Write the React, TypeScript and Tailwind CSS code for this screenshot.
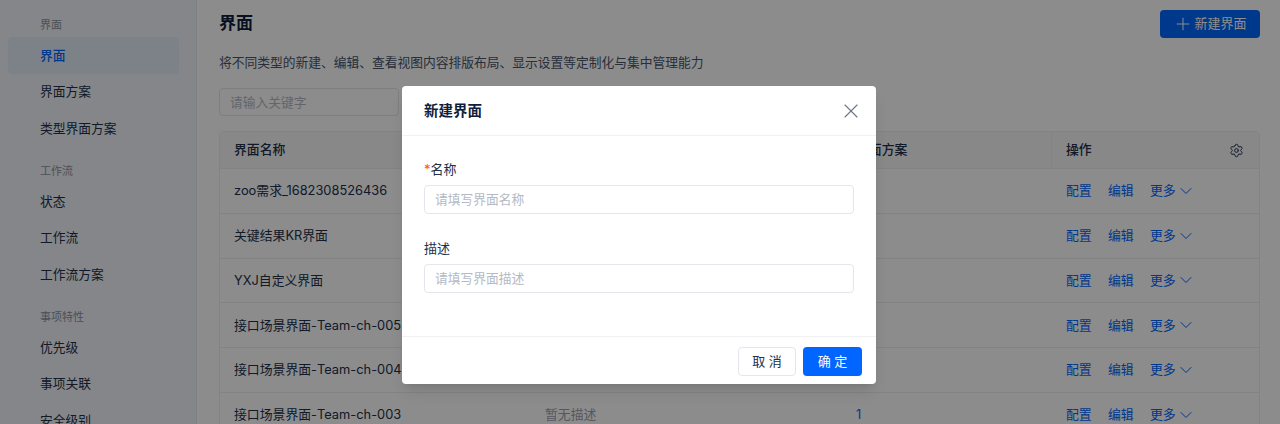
import React from 'react';
import { ChevronDown, Plus, Settings, X } from 'lucide-react';

const FONT = "font-['Inter','Noto_Sans_CJK_SC',sans-serif]";

const sideGroups = [
  { title: '界面', items: ['界面', '界面方案', '类型界面方案'] },
  { title: '工作流', items: ['状态', '工作流', '工作流方案'] },
  { title: '事项特性', items: ['优先级', '事项关联', '安全级别'] }
];

const rows = [
  { name: 'zoo需求_1682308526436', desc: '', count: '' },
  { name: '关键结果KR界面', desc: '', count: '' },
  { name: 'YXJ自定义界面', desc: '', count: '' },
  { name: '接口场景界面-Team-ch-005', desc: '', count: '' },
  { name: '接口场景界面-Team-ch-004', desc: '', count: '' },
  { name: '接口场景界面-Team-ch-003', desc: '暂无描述', count: '1' }
];

const Sidebar: React.FC = () => (
  <aside className="w-[197px] shrink-0 border-r border-[#e8eaee] bg-[#f3f5f9] pl-2 pr-[17px] pt-[17px]">
    {sideGroups.map((group) => (
      <div key={group.title} className="mb-[16.5px]">
        <div className="flex h-4 items-center pl-8 text-[11px] text-[#8b919e]">{group.title}</div>
        <div className="mt-[4px]">
          {group.items.map((item, i) => {
            const active = group.title === '界面' && i === 0;
            return (
              <div
                key={item}
                className={`flex h-[36.5px] items-center rounded pl-8 text-[12.75px] ${
                  active ? 'bg-[#e4edfa] font-medium text-[#0066ff]' : 'text-[#22304a]'
                }`}
              >
                {item}
              </div>
            );
          })}
        </div>
      </div>
    ))}
  </aside>
);

const Table: React.FC = () => (
  <div className="mt-[15px] rounded border border-[#eceef2] text-[12.85px] text-[#22304a]">
    <div className="grid h-[36px] grid-cols-[311px_311px_209px_1fr] items-center bg-[#f7f8fa] font-medium">
      <div className="pl-[14px]">界面名称</div>
      <div />
      <div className="pl-[14px]">界面方案</div>
      <div className="flex items-center justify-between border-l border-[#eceef2] pl-[14px] pr-[15px] leading-[36px]">
        操作
        <Settings size={15} strokeWidth={1.6} />
      </div>
    </div>
    {rows.map((row) => (
      <div
        key={row.name}
        className="grid h-[44.8px] grid-cols-[311px_311px_209px_1fr] items-center border-t border-[#eceef2]"
      >
        <div className="pl-[14px]">{row.name}</div>
        <div className="pl-[14px] text-[#9aa0ac]">{row.desc}</div>
        <div className="pl-[14px] text-[#0066ff]">{row.count}</div>
        <div className="flex items-center gap-[16.3px] pl-[15px] text-[#0066ff]">
          <span>配置</span>
          <span>编辑</span>
          <span className="flex items-center">
            更多
            <ChevronDown size={20} strokeWidth={1.2} />
          </span>
        </div>
      </div>
    ))}
  </div>
);

const Field: React.FC<{ label: string; placeholder: string; required?: boolean }> = ({
  label,
  placeholder,
  required
}) => (
  <div className="mb-[22px]">
    <div className="flex h-[24px] items-center text-[13px] leading-none text-[#22304a]">
      {required && <span className="text-[#ff4d30]">*</span>}
      {label}
    </div>
    <input
      readOnly
      placeholder={placeholder}
      className="mt-[4px] block h-[29px] w-full rounded border border-[#e4e6ec] bg-white px-[10px] text-[12.75px] placeholder:text-[#b4b9c4]"
    />
  </div>
);

const Dialog: React.FC = () => (
  <div className="absolute inset-0 bg-black/45">
    <div className="ml-[402px] mt-[86px] w-[474px] rounded bg-white shadow-lg">
      <div className="flex h-[50px] items-center justify-between border-b border-[#f0f1f4] pl-[22px] pr-[13px]">
        <span className="text-[14.5px] font-semibold text-[#0f1e3d]">新建界面</span>
        <X size={24} strokeWidth={1.1} className="text-[#6b7486]" />
      </div>
      <div className="h-[200px] px-[22px] pt-[21px]">
        <Field label="名称" placeholder="请填写界面名称" required />
        <Field label="描述" placeholder="请填写界面描述" />
      </div>
      <div className="flex h-[48px] items-start justify-end gap-[7px] border-t border-[#f0f1f4] pr-[14px] pt-[10px] text-[13px]">
        <button className="h-[29px] w-[58px] rounded border border-[#e4e6ec] bg-white text-[#22304a]">取 消</button>
        <button className="h-[29px] w-[59px] rounded bg-[#0066ff] text-white">确 定</button>
      </div>
    </div>
  </div>
);

export default function App() {
  return (
    <div className={`relative flex h-[424px] w-[1280px] overflow-hidden bg-white ${FONT}`}>
      <Sidebar />
      <main className="min-w-0 flex-1 pl-[22px] pr-5 pt-[10px]">
        <div className="flex h-[28px] items-center justify-between">
          <h1 className="text-[17px] font-semibold text-[#0f1e3d]">界面</h1>
          <button className="flex h-[28px] w-[100px] items-center justify-center gap-[1px] rounded bg-[#0066ff] text-[13px] text-white">
            <Plus size={20} strokeWidth={1.2} />
            新建界面
          </button>
        </div>
        <p className="mt-[15px] h-[20px] text-[12.75px] leading-[20px] text-[#4a556b]">
          将不同类型的新建、编辑、查看视图内容排版布局、显示设置等定制化与集中管理能力
        </p>
        <div className="mt-[15px] flex">
          <input
            readOnly
            placeholder="请输入关键字"
            className="h-[28px] w-[180px] rounded border border-[#e4e6ec] bg-white px-[10px] text-[12.75px] placeholder:text-[#b4b9c4]"
          />
        </div>
        <Table />
      </main>
      <Dialog />
    </div>
  );
}
